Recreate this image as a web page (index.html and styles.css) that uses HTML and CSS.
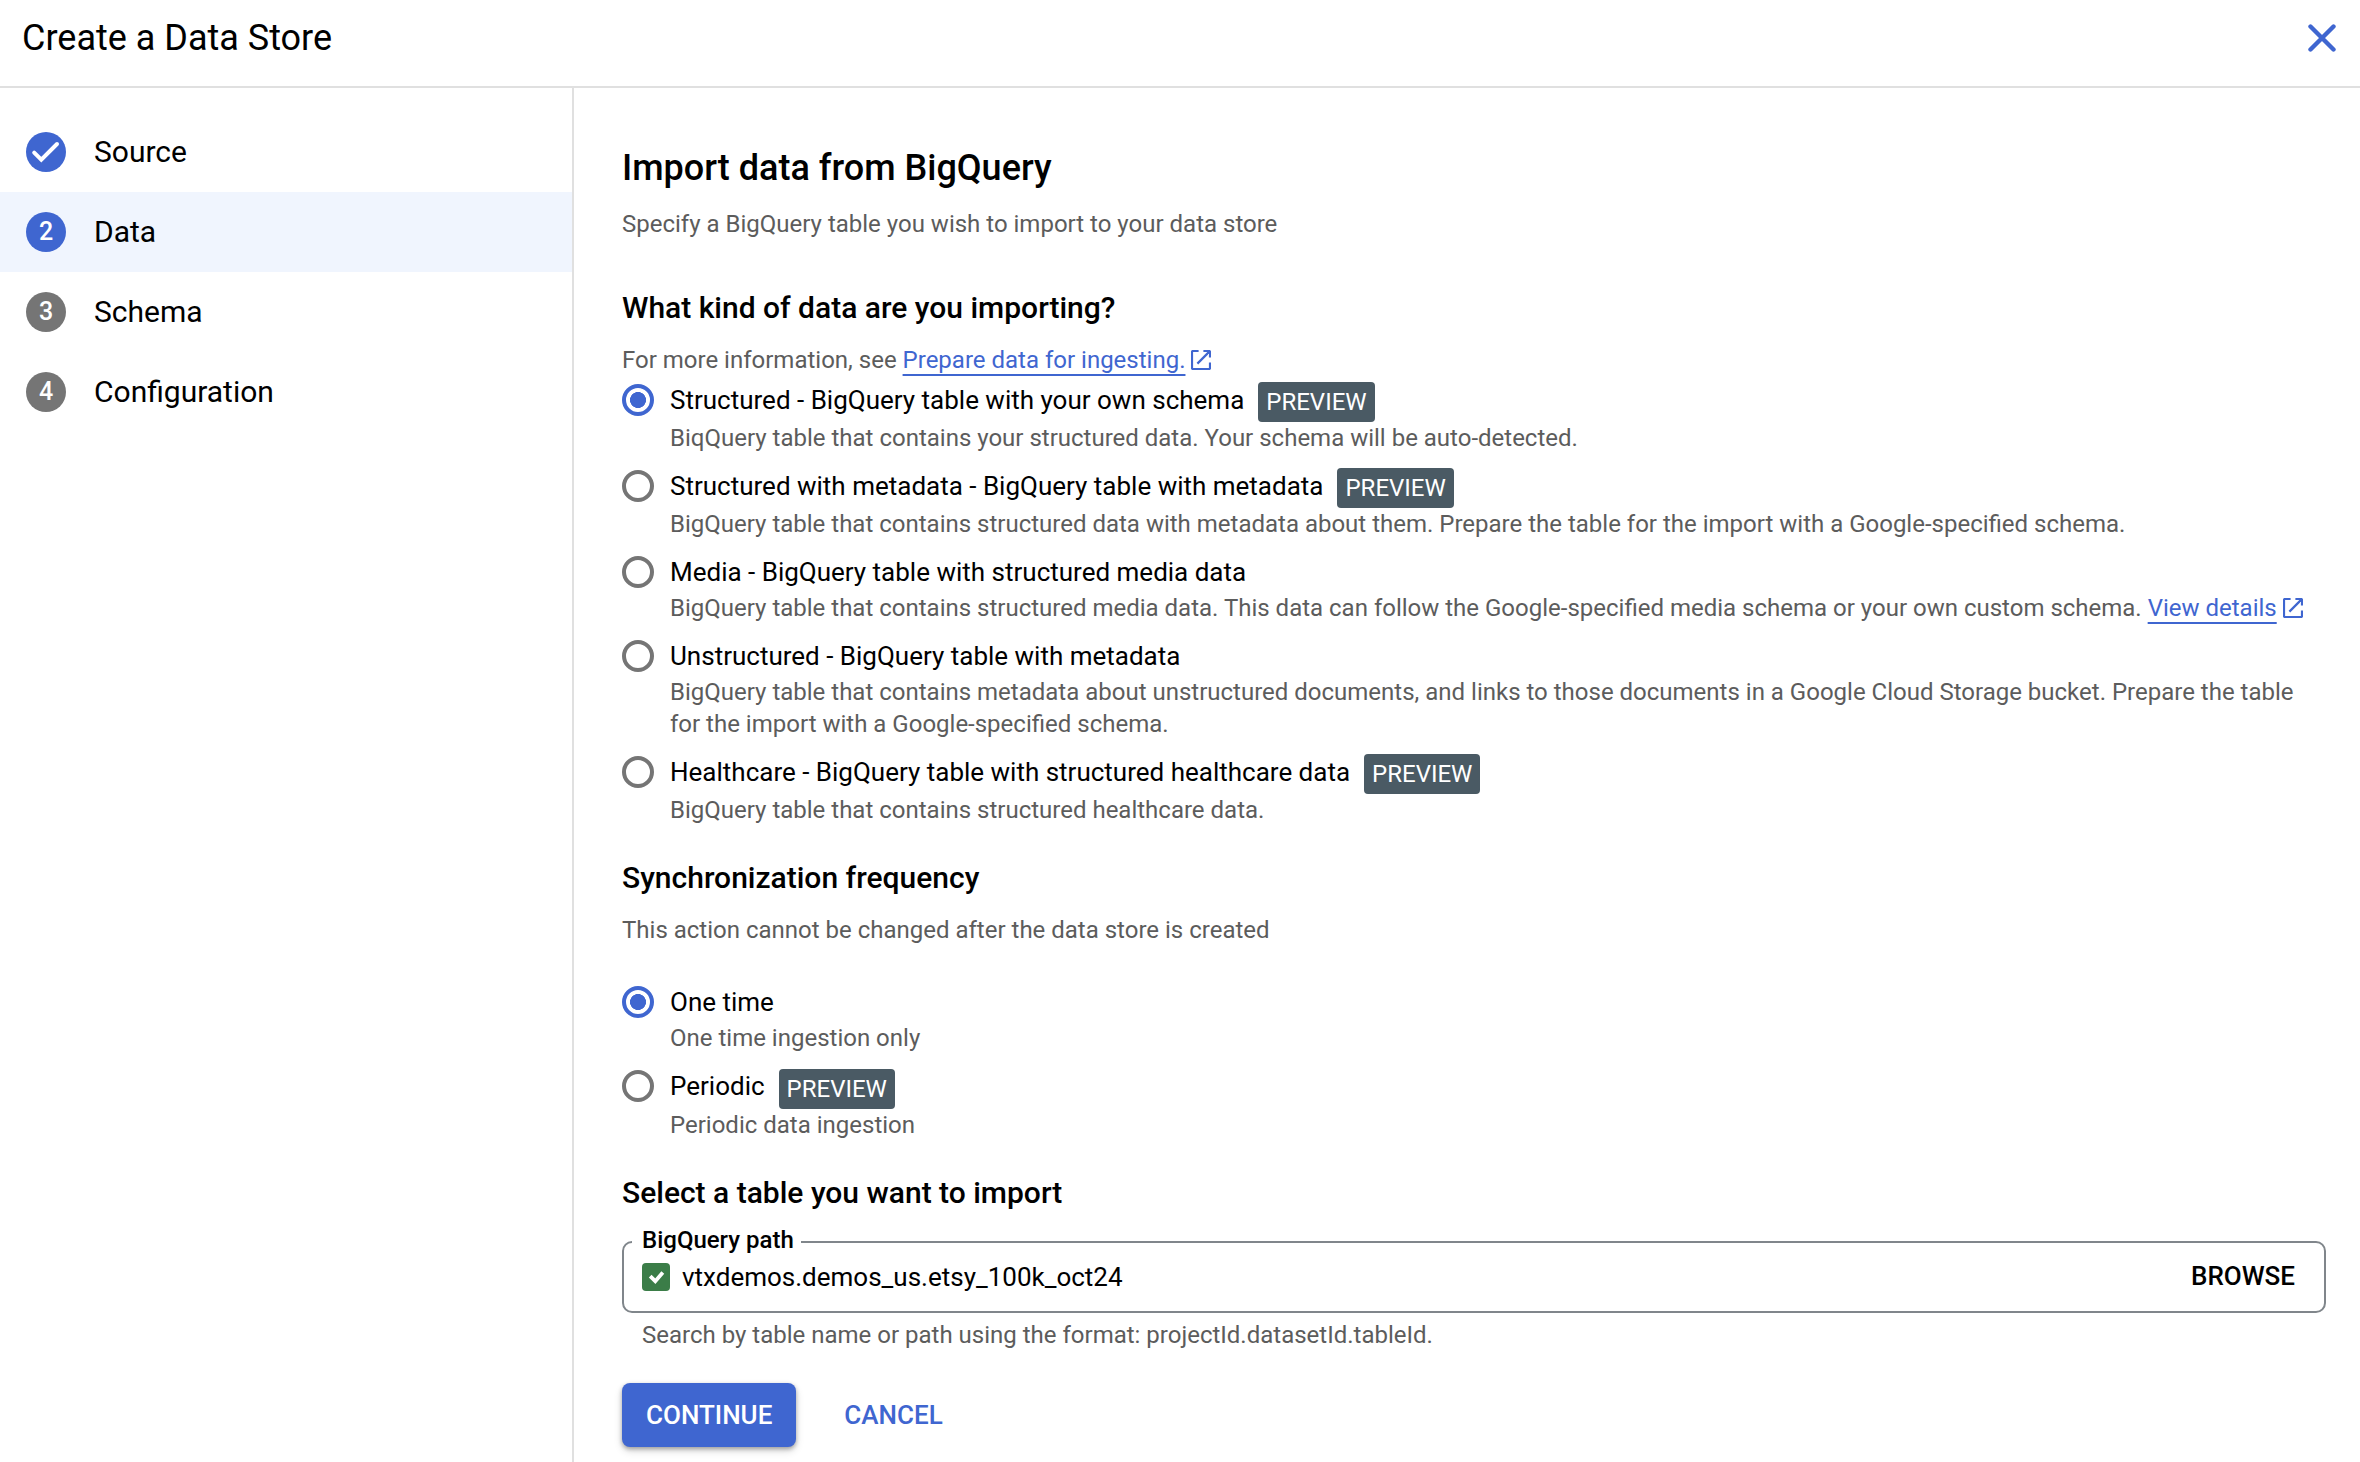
FILE: index.html
```
<!DOCTYPE html>
<html lang="en">
<head>
<meta charset="utf-8">
<title>Create a Data Store</title>
<link rel="stylesheet" href="styles.css">
</head>
<body>
<svg class="defs" aria-hidden="true">
  <symbol id="open-new" viewBox="0 0 20 20">
    <path d="M7.6 1H2a1 1 0 0 0-1 1v16a1 1 0 0 0 1 1h16a1 1 0 0 0 1-1v-5.6M12.4 1H18a1 1 0 0 1 1 1v5.6M18.6 1.4 6.4 13.6" fill="none" stroke="currentColor" stroke-width="2.2"/>
  </symbol>
</svg>
<header class="topbar">
  <h1 class="topbar-title">Create a Data Store</h1>
  <button class="close" type="button" aria-label="Close">
    <svg width="28" height="28" viewBox="0 0 28 28"><path d="M2.5 2.5l23 23M25.5 2.5l-23 23" stroke="currentColor" stroke-width="4.4" stroke-linecap="round"/></svg>
  </button>
</header>
<div class="layout">
  <nav class="steps">
    <a class="step">
      <span class="step-dot done"><svg width="40" height="40" viewBox="0 0 40 40"><path d="M8.2 20.6l7.1 7L31 12" fill="none" stroke="#fff" stroke-width="4" stroke-linecap="round"/></svg></span>
      <span>Source</span>
    </a>
    <a class="step active"><span class="step-dot">2</span><span>Data</span></a>
    <a class="step"><span class="step-dot">3</span><span>Schema</span></a>
    <a class="step"><span class="step-dot">4</span><span>Configuration</span></a>
  </nav>
  <main class="content">
    <h2 class="page-title">Import data from BigQuery</h2>
    <p class="muted">Specify a BigQuery table you wish to import to your data store</p>

    <h3 class="section-title first">What kind of data are you importing?</h3>
    <p class="muted">For more information, see <a class="link">Prepare data for ingesting.</a><svg class="ext"><use href="#open-new"/></svg></p>
    <div class="options kinds">
      <div class="option">
        <span class="radio checked"></span>
        <div class="option-body">
          <div class="option-head"><span>Structured - BigQuery table with your own schema</span><span class="badge">PREVIEW</span></div>
          <p class="muted">BiqQuery table that contains your structured data. Your schema will be auto-detected.</p>
        </div>
      </div>
      <div class="option">
        <span class="radio"></span>
        <div class="option-body">
          <div class="option-head"><span>Structured with metadata - BigQuery table with metadata</span><span class="badge">PREVIEW</span></div>
          <p class="muted">BigQuery table that contains structured data with metadata about them. Prepare the table for the import with a Google-specified schema.</p>
        </div>
      </div>
      <div class="option">
        <span class="radio"></span>
        <div class="option-body">
          <div class="option-head"><span>Media - BigQuery table with structured media data</span></div>
          <p class="muted">BigQuery table that contains structured media data. This data can follow the Google-specified media schema or your own custom schema. <a class="link">View details</a><svg class="ext"><use href="#open-new"/></svg></p>
        </div>
      </div>
      <div class="option">
        <span class="radio"></span>
        <div class="option-body">
          <div class="option-head"><span>Unstructured - BigQuery table with metadata</span></div>
          <p class="muted">BigQuery table that contains metadata about unstructured documents, and links to those documents in a Google Cloud Storage bucket. Prepare the table for the import with a Google-specified schema.</p>
        </div>
      </div>
      <div class="option">
        <span class="radio"></span>
        <div class="option-body">
          <div class="option-head"><span>Healthcare - BigQuery table with structured healthcare data</span><span class="badge">PREVIEW</span></div>
          <p class="muted">BigQuery table that contains structured healthcare data.</p>
        </div>
      </div>
    </div>

    <h3 class="section-title">Synchronization frequency</h3>
    <p class="muted">This action cannot be changed after the data store is created</p>
    <div class="options frequency">
      <div class="option">
        <span class="radio checked"></span>
        <div class="option-body">
          <div class="option-head"><span>One time</span></div>
          <p class="muted">One time ingestion only</p>
        </div>
      </div>
      <div class="option">
        <span class="radio"></span>
        <div class="option-body">
          <div class="option-head"><span>Periodic</span><span class="badge">PREVIEW</span></div>
          <p class="muted">Periodic data ingestion</p>
        </div>
      </div>
    </div>

    <h3 class="section-title last">Select a table you want to import</h3>
    <fieldset class="field">
      <legend>BigQuery path</legend>
      <div class="field-row">
        <span class="valid"><svg width="28" height="28" viewBox="0 0 28 28"><path d="M8.2 13.2l5.1 5L20.8 9.6" fill="none" stroke="#fff" stroke-width="3.8"/></svg></span>
        <span class="value">vtxdemos.demos_us.etsy_100k_oct24</span>
        <button class="browse" type="button">BROWSE</button>
      </div>
    </fieldset>
    <p class="muted hint">Search by table name or path using the format: projectId.datasetId.tableId.</p>
    <div class="actions">
      <button class="btn primary" type="button">CONTINUE</button>
      <button class="btn text" type="button">CANCEL</button>
    </div>
  </main>
</div>
</body>
</html>
```
FILE: styles.css
```
* { box-sizing: border-box; }
body {
  margin: 0;
  height: 1462px;
  overflow: hidden;
  display: flex;
  flex-direction: column;
  background: #fff;
  color: #000;
  font: 400 26px/32px Roboto, sans-serif;
}
h1, h2, h3, p { margin: 0; }
button { border: 0; padding: 0; background: none; font: inherit; color: inherit; }
.defs { position: absolute; width: 0; height: 0; }

.topbar {
  flex: none;
  height: 88px;
  border-bottom: 2px solid #e0e0e0;
  padding: 0 24px 10px 22px;
  display: flex;
  align-items: center;
  justify-content: space-between;
}
.topbar-title { font-size: 36px; font-weight: 400; line-height: 48px; }
.close { display: flex; color: #3f66d0; }

.layout { flex: 1; min-height: 0; display: flex; }
.steps { flex: none; width: 574px; border-right: 2px solid #e0e0e0; padding-top: 24px; }
.step {
  display: flex;
  align-items: center;
  gap: 28px;
  height: 80px;
  padding-left: 26px;
  font-size: 30px;
  line-height: 40px;
}
.step.active { background: #f0f5fe; }
.step-dot {
  width: 40px;
  height: 40px;
  border-radius: 50%;
  background: #757575;
  color: #fff;
  font-size: 25px;
  font-weight: 500;
  display: flex;
  justify-content: center;
}
.active .step-dot, .step-dot.done { background: #3f66d0; }

.content { flex: 1; min-width: 0; padding: 56px 34px 0 48px; }
.page-title { font-size: 36px; font-weight: 500; line-height: 48px; margin-bottom: 16px; }
.muted { font-size: 24px; line-height: 32px; color: #5c5c5c; }
.section-title { font-size: 30px; font-weight: 500; line-height: 40px; margin: 32px 0 16px; }
.section-title.first { margin-top: 48px; }
.section-title.last { margin-bottom: 15px; }
.link {
  color: #3f66d0;
  text-decoration: underline 2px;
  text-underline-offset: 6px;
  text-decoration-skip-ink: none;
}
.ext { width: 20px; height: 20px; margin-left: 6px; vertical-align: -2px; color: #3f66d0; }

.options { display: flex; flex-direction: column; gap: 16px; }
.kinds { margin-top: 8px; }
.frequency { margin-top: 40px; }
.option { display: flex; gap: 16px; }
.option-body { flex: 1; min-width: 0; }
.option-head { display: flex; align-items: flex-start; gap: 14px; min-height: 36px; }
.radio {
  flex: none;
  width: 32px;
  height: 32px;
  border: 4px solid #757575;
  border-radius: 50%;
}
.radio.checked {
  border-color: #3f66d0;
  background: radial-gradient(circle, #3f66d0 7.7px, #fff 8.3px);
}
.badge {
  height: 40px;
  margin-top: -2px;
  padding: 0 8px;
  border-radius: 4px;
  background: #4a5a64;
  color: #fff;
  font-size: 24px;
  line-height: 40px;
}
.frequency .badge { margin-top: -1px; }

.field {
  margin: 0;
  padding: 0;
  height: 85px;
  border: 2px solid #80868b;
  border-radius: 10px;
}
.field legend {
  height: 28px;
  margin-left: 8px;
  padding: 0 7px 0 10px;
  font-size: 24px;
  font-weight: 500;
  line-height: 24px;
}
.field-row { display: flex; align-items: center; padding: 5px 29px 0 18px; }
.valid { display: flex; border-radius: 4px; background: #3b7d48; margin-right: 12px; }
.value { flex: 1; }
.browse { font-weight: 500; line-height: 30px; margin-bottom: 2px; }
.hint { margin-top: 6px; padding-left: 20px; }

.actions { display: flex; gap: 24px; margin-top: 32px; }
.btn { height: 64px; padding: 0 24px; border-radius: 8px; font-weight: 500; line-height: 64px; }
.primary { background: #3f66d0; color: #fff; box-shadow: 0 2px 4px rgba(0,0,0,.3), 0 4px 8px rgba(0,0,0,.14); }
.text { color: #3f66d0; }
```
